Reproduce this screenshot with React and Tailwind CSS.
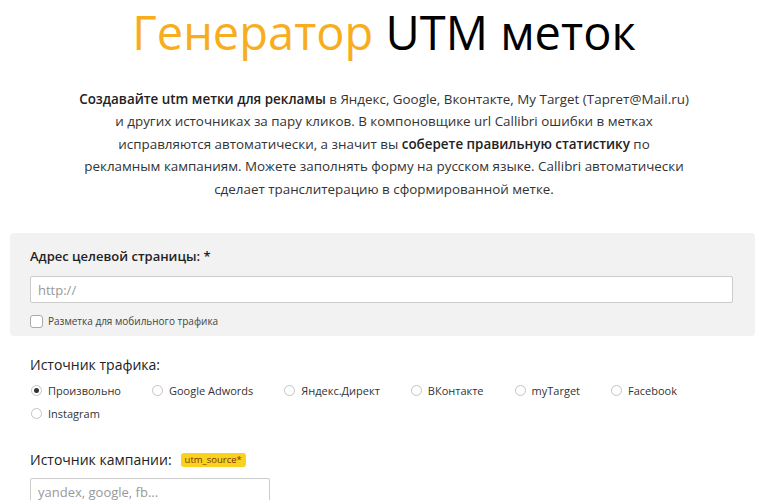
import React, { useState } from "react";

const sources = ["Произвольно", "Google Adwords", "Яндекс.Директ", "ВКонтакте", "myTarget", "Facebook", "Instagram"];

function Radio({ label, checked, onClick }) {
  return (
    <label className="flex cursor-pointer items-center gap-[6px]" onClick={onClick}>
      <span className="flex h-[11px] w-[11px] items-center justify-center rounded-full border border-[#c4c4c4] bg-white">
        {checked && <span className="h-[5px] w-[5px] rounded-full bg-[#333]" />}
      </span>
      <span className="text-[11px] text-[#333]">{label}</span>
    </label>
  );
}

export default function App() {
  const [source, setSource] = useState("Произвольно");
  const [mobile, setMobile] = useState(false);

  return (
    <div className="min-h-[500px] bg-white font-['Open_Sans',sans-serif] text-[#222]">
      {/* Title */}
      <h1 className="text-center text-[47px] leading-[64px] font-normal">
        <span className="text-[#f8ad1c]">Генератор</span> <span className="text-black">UTM меток</span>
      </h1>

      {/* Intro */}
      <p className="mx-auto mt-[24px] w-[700px] text-center text-[13.4px] leading-[22.4px] text-[#333]">
        <b className="font-semibold text-[#222]">Создавайте utm метки для рекламы</b> в Яндекс, Google, Вконтакте, My Target (Таргет@Mail.ru)
        <br />
        и других источниках за пару кликов. В компоновщике url Callibri ошибки в метках
        <br />
        исправляются автоматически, а значит вы <b className="font-semibold text-[#222]">соберете правильную статистику</b> по
        <br />
        рекламным кампаниям. Можете заполнять форму на русском языке. Callibri автоматически
        <br />
        сделает транслитерацию в сформированной метке.
      </p>

      {/* URL panel */}
      <div className="mx-[10px] mt-[33px] w-[745px] rounded-[4px] bg-[#f2f2f2] px-[20px] pt-[13px] pb-[8px]">
        <div className="text-[13px] leading-[20px] font-semibold text-[#222]">Адрес целевой страницы: *</div>
        <input
          className="mt-[10px] block h-[27px] w-[703px] rounded-[2px] border border-[#ccc] bg-white px-[7px] text-[13px] text-[#333] placeholder-[#999] outline-none"
          placeholder="http://"
        />
        <label className="mt-[11px] flex items-center gap-[5px]" onClick={() => setMobile(!mobile)}>
          <span className="flex h-[13px] w-[13px] items-center justify-center rounded-[3px] border border-[#aaa] bg-white text-[10px] leading-none">
            {mobile ? "✓" : ""}
          </span>
          <span className="text-[10px] leading-[14px] text-[#444]">Разметка для мобильного трафика</span>
        </label>
      </div>

      {/* Traffic source */}
      <div className="px-[30px] pt-[18px]">
        <div className="text-[14px] leading-[22px] text-[#222]">Источник трафика:</div>
        <div className="mt-[6px] flex w-[700px] flex-wrap gap-x-[31px] gap-y-[6px] pl-[1px] leading-[17px]">
          {sources.map((s) => (
            <Radio key={s} label={s} checked={source === s} onClick={() => setSource(s)} />
          ))}
        </div>

        {/* Campaign source */}
        <div className="mt-[27px] flex items-center gap-[9px]">
          <span className="text-[14px] leading-[22px] text-[#222]">Источник кампании:</span>
          <span className="rounded-[3px] bg-[#f9d21f] px-[4px] text-[9.5px] leading-[14px] text-[#7a3300]">utm_source*</span>
        </div>
        <input
          className="mt-[7px] block h-[28px] w-[240px] rounded-[2px] border border-[#ccc] bg-white px-[7px] text-[13px] text-[#333] placeholder-[#999] outline-none"
          placeholder="yandex, google, fb..."
        />
      </div>
    </div>
  );
}
